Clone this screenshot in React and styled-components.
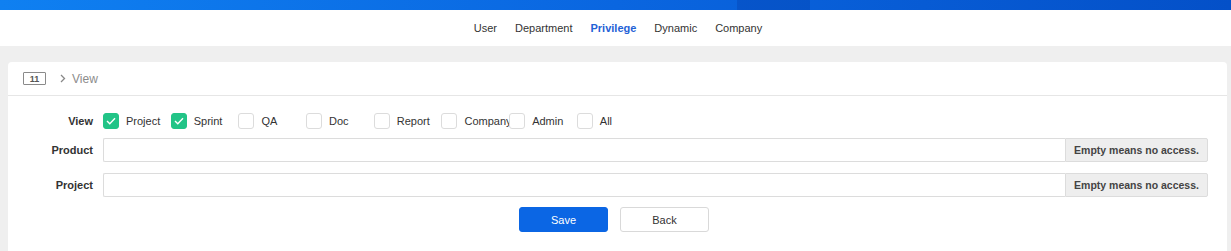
import React, { useState } from "react";
import styled, { createGlobalStyle } from "styled-components";

const GlobalStyle = createGlobalStyle`
  * { box-sizing: border-box; }
  body {
    margin: 0;
    background: #efefef;
    font-family: "Liberation Sans", Arial, sans-serif;
    color: #333;
  }
`;

const TopBar = styled.div`
  height: 10px;
  background: linear-gradient(90deg, #0f80f1 0%, #0a66e0 50%, #0450c8 100%);
  display: flex;
`;

const TopActive = styled.div`
  margin-left: 737px;
  width: 73px;
  height: 100%;
  background: rgba(0, 40, 140, 0.22);
`;

const Nav = styled.nav`
  height: 36px;
  background: #fff;
  display: flex;
  justify-content: center;
  align-items: center;
  gap: 18px;
  padding-left: 5px;
`;

const NavItem = styled.a`
  font-size: 11px;
  color: ${(p) => (p.active ? "#1f62d6" : "#333")};
  font-weight: ${(p) => (p.active ? 700 : 400)};
  cursor: pointer;
`;

const Panel = styled.div`
  margin: 16px 4px 0 8px;
  background: #fff;
  border-radius: 4px 4px 0 0;
  min-height: 189px;
`;

const PanelHeader = styled.div`
  height: 34px;
  border-bottom: 1px solid #e6e6e6;
  display: flex;
  align-items: center;
  padding-left: 15px;
  gap: 8px;
`;

const Badge = styled.span`
  width: 23px;
  height: 13px;
  border: 1px solid #8a8a8a;
  border-radius: 1px;
  font-size: 9px;
  font-weight: 700;
  color: #555;
  display: flex;
  align-items: center;
  justify-content: center;
  margin-right: 6px;
`;

const Crumb = styled.span`
  font-size: 12px;
  color: #8c8c8c;
  display: flex;
  align-items: center;
  gap: 6px;
`;

const Form = styled.div`
  padding: 15px 19px 0 0;
  display: flex;
  flex-direction: column;
  gap: 8px;
`;

const Row = styled.div`
  display: grid;
  grid-template-columns: 85px 1fr;
  column-gap: 10px;
  align-items: center;
  margin-bottom: ${(p) => p.mb || 0}px;
`;

const Label = styled.label`
  text-align: right;
  font-size: 11px;
  font-weight: 700;
  color: #333;
`;

const Checks = styled.div`
  display: flex;
  height: 20px;
  align-items: center;
`;

const CheckItem = styled.label`
  width: 67.7px;
  flex: none;
  display: flex;
  align-items: center;
  gap: 7px;
  font-size: 11px;
  color: #333;
  white-space: nowrap;
  cursor: pointer;
`;

const Box = styled.span`
  flex: none;
  width: 16px;
  height: 16px;
  border-radius: 3px;
  border: 1px solid ${(p) => (p.on ? "#22c487" : "#dcdcdc")};
  background: ${(p) => (p.on ? "#22c487" : "#fff")};
  display: flex;
  align-items: center;
  justify-content: center;
`;

const InputGroup = styled.div`
  display: flex;
  height: 24px;
`;

const Input = styled.input`
  flex: 1;
  border: 1px solid #dcdcdc;
  border-right: none;
  border-radius: 2px 0 0 2px;
  outline: none;
  font-size: 12px;
  padding: 0 6px;
`;

const Addon = styled.span`
  width: 143px;
  background: #eee;
  border: 1px solid #dcdcdc;
  border-radius: 0 2px 2px 0;
  font-size: 10.5px;
  font-weight: 700;
  color: #444;
  display: flex;
  align-items: center;
  justify-content: center;
`;

const Actions = styled.div`
  display: flex;
  justify-content: center;
  gap: 12px;
  margin-top: 2px;
  padding-left: 12px;
`;

const Button = styled.button`
  width: 89px;
  height: 25px;
  border-radius: 3px;
  font-family: inherit;
  font-size: 11px;
  cursor: pointer;
  border: 1px solid ${(p) => (p.primary ? "#0b66e4" : "#d9d9d9")};
  background: ${(p) => (p.primary ? "#0b66e4" : "#fff")};
  color: ${(p) => (p.primary ? "#fff" : "#333")};
`;

const Tick = () => (
  <svg width="10" height="8" viewBox="0 0 10 8">
    <path d="M1 4l2.8 2.8L9 1.3" fill="none" stroke="#fff" strokeWidth="1.4" />
  </svg>
);

const Chevron = () => (
  <svg width="6" height="9" viewBox="0 0 6 9">
    <path d="M1 1l3.5 3.5L1 8" fill="none" stroke="#888" strokeWidth="1.3" />
  </svg>
);

const items = ["Project", "Sprint", "QA", "Doc", "Report", "Company", "Admin", "All"];

export default function App() {
  const [checked, setChecked] = useState({ Project: true, Sprint: true });
  const toggle = (k) => setChecked({ ...checked, [k]: !checked[k] });

  return (
    <>
      <GlobalStyle />
      <TopBar>
        <TopActive />
      </TopBar>
      <Nav>
        <NavItem>User</NavItem>
        <NavItem>Department</NavItem>
        <NavItem active>Privilege</NavItem>
        <NavItem>Dynamic</NavItem>
        <NavItem>Company</NavItem>
      </Nav>
      <Panel>
        <PanelHeader>
          <Badge>11</Badge>
          <Crumb>
            <Chevron />
            View
          </Crumb>
        </PanelHeader>
        <Form>
          <Row mb={-1}>
            <Label>View</Label>
            <Checks>
              {items.map((k) => (
                <CheckItem key={k} onClick={() => toggle(k)}>
                  <Box on={checked[k]}>{checked[k] && <Tick />}</Box>
                  {k}
                </CheckItem>
              ))}
            </Checks>
          </Row>
          <Row mb={3}>
            <Label>Product</Label>
            <InputGroup>
              <Input />
              <Addon>Empty means no access.</Addon>
            </InputGroup>
          </Row>
          <Row>
            <Label>Project</Label>
            <InputGroup>
              <Input />
              <Addon>Empty means no access.</Addon>
            </InputGroup>
          </Row>
          <Actions>
            <Button primary>Save</Button>
            <Button>Back</Button>
          </Actions>
        </Form>
      </Panel>
    </>
  );
}
